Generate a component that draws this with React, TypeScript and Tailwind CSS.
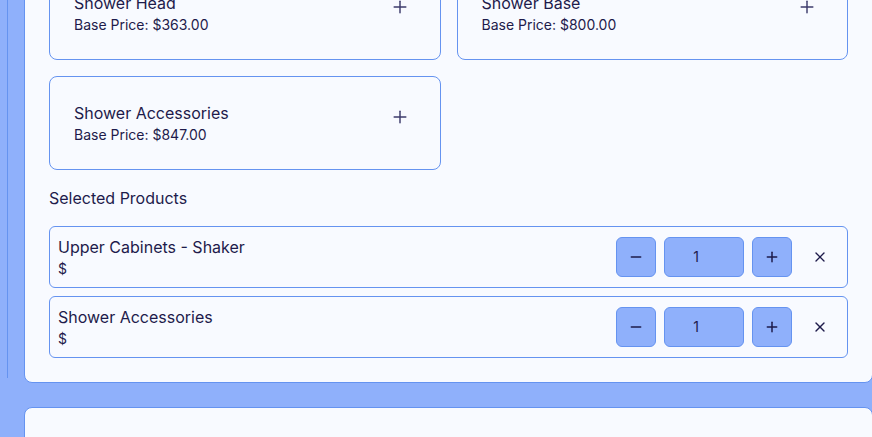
import { Minus, Plus, X } from 'lucide-react';

type Product = { id: string; name: string; basePrice: number };
type Line = { id: string; name: string; qty: number };

const PRODUCTS: Product[] = [
  { id: 'shower-head', name: 'Shower Head', basePrice: 363 },
  { id: 'shower-base', name: 'Shower Base', basePrice: 800 },
  { id: 'shower-accessories', name: 'Shower Accessories', basePrice: 847 },
];

const SELECTED: Line[] = [
  { id: 'upper-cabinets-shaker', name: 'Upper Cabinets - Shaker', qty: 1 },
  { id: 'shower-accessories', name: 'Shower Accessories', qty: 1 },
];

const panel = 'rounded-lg border border-[#6593f0] bg-[#f8faff]';

function ProductCard({ product }: { product: Product }) {
  return (
    <div className="flex items-start justify-between rounded-lg border border-[#6593f0] bg-[#f8faff] p-6">
      <div>
        <p className="text-base leading-6">{product.name}</p>
        <p className="text-sm leading-5">Base Price: ${product.basePrice.toFixed(2)}</p>
      </div>
      <button type="button" className="p-1.5 text-[#3d3b6c]">
        <Plus size={20} strokeWidth={1.75} />
      </button>
    </div>
  );
}

function SelectedRow({ line }: { line: Line }) {
  return (
    <div className="flex items-center justify-between rounded-md border border-[#6593f0] p-2">
      <div>
        <p className="text-base leading-6">{line.name}</p>
        <p className="text-sm leading-5">$</p>
      </div>
      <div className="flex items-center gap-2">
        <button
          type="button"
          className="flex h-10 w-10 items-center justify-center rounded-md border border-[#6593f0] bg-[#8fb0fb]"
        >
          <Minus size={16} strokeWidth={2.25} />
        </button>
        <div className="flex h-10 w-20 items-center justify-center rounded-md border border-[#6593f0] bg-[#8fb0fb] pr-4 text-sm">
          {line.qty}
        </div>
        <button
          type="button"
          className="flex h-10 w-10 items-center justify-center rounded-md border border-[#6593f0] bg-[#8fb0fb]"
        >
          <Plus size={16} strokeWidth={2.25} />
        </button>
        <button type="button" className="flex h-10 w-[39px] items-center justify-center">
          <X size={16} strokeWidth={2} />
        </button>
      </div>
    </div>
  );
}

export default function App() {
  return (
    <div
      className="h-[437px] w-[872px] overflow-hidden bg-[#8fb0fb] pl-[7px] text-[#1e1b4b]"
      style={{ fontFamily: 'Inter, "Noto Sans", sans-serif' }}
    >
      <div className="h-full border-l border-[#6593f0] pl-4">
        <div className={`${panel} -mt-[59px] w-[849px] p-6`}>
          <div className="grid grid-cols-2 gap-4">
            {PRODUCTS.map((p) => (
              <ProductCard key={p.id} product={p} />
            ))}
          </div>
          <h2 className="mt-4 text-base leading-6">Selected Products</h2>
          <div className="mt-4 space-y-2">
            {SELECTED.map((l) => (
              <SelectedRow key={l.id} line={l} />
            ))}
          </div>
        </div>
        <div className={`${panel} mt-6 h-[200px] w-[849px]`} />
      </div>
    </div>
  );
}
